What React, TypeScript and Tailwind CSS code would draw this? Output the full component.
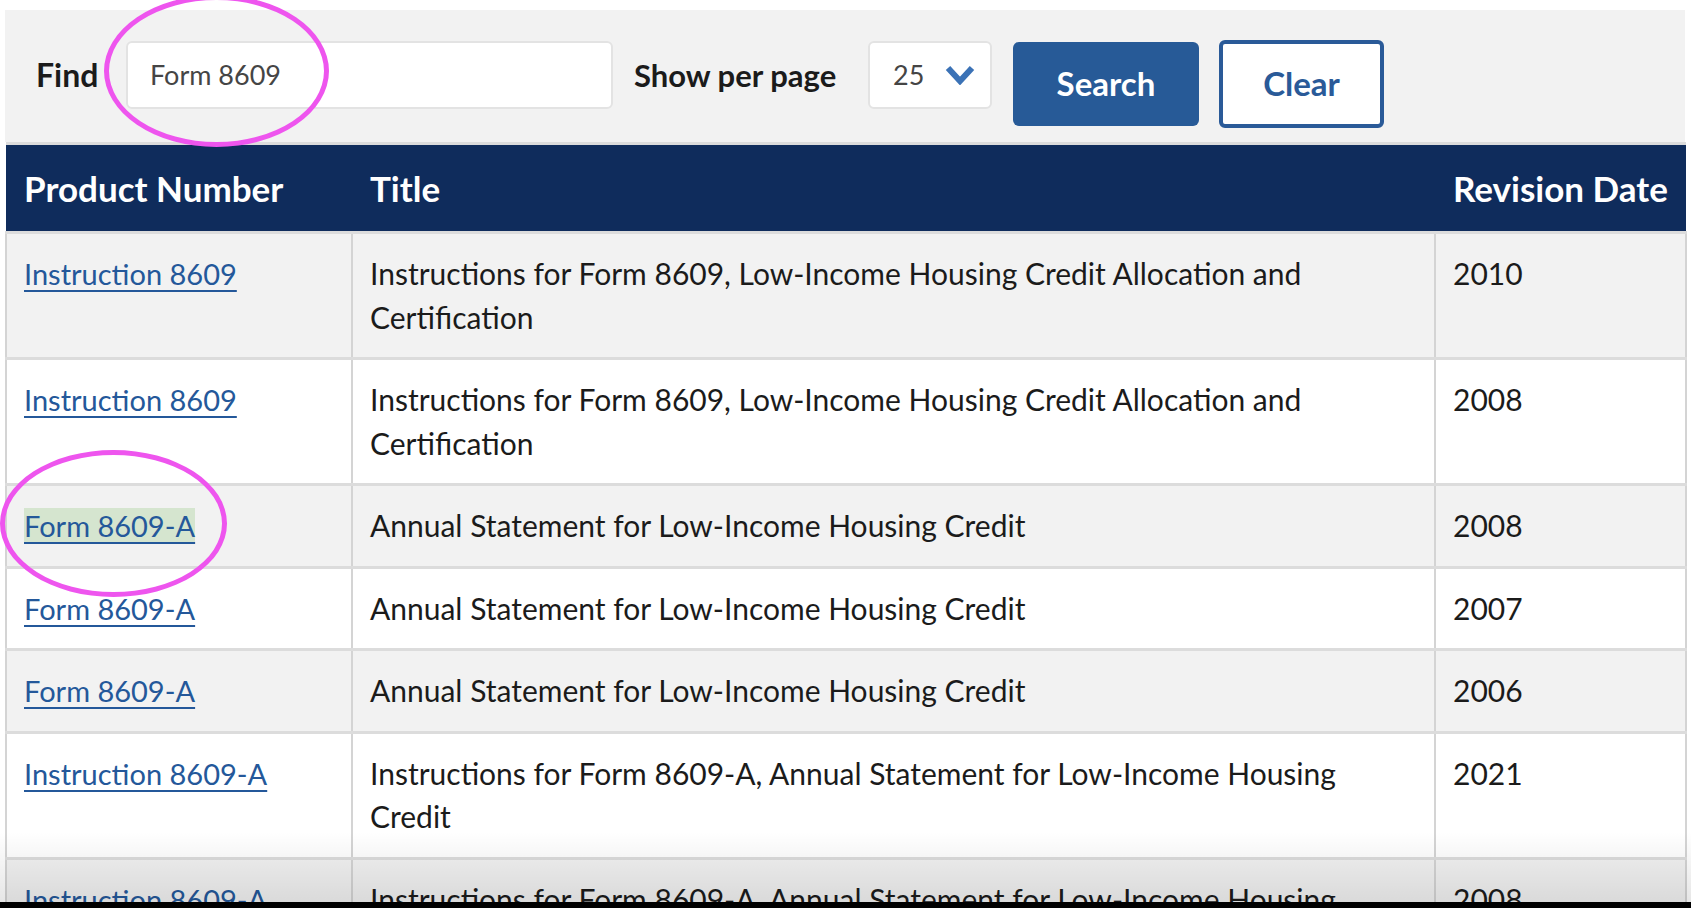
import React from 'react';

type Row = {
  product: string;
  title: string;
  date: string;
  highlight?: boolean;
};

const rows: Row[] = [
  {
    product: 'Instruction 8609',
    title: 'Instructions for Form 8609, Low-Income Housing Credit Allocation and Certification',
    date: '2010',
  },
  {
    product: 'Instruction 8609',
    title: 'Instructions for Form 8609, Low-Income Housing Credit Allocation and Certification',
    date: '2008',
  },
  {
    product: 'Form 8609-A',
    title: 'Annual Statement for Low-Income Housing Credit',
    date: '2008',
    highlight: true,
  },
  { product: 'Form 8609-A', title: 'Annual Statement for Low-Income Housing Credit', date: '2007' },
  { product: 'Form 8609-A', title: 'Annual Statement for Low-Income Housing Credit', date: '2006' },
  {
    product: 'Instruction 8609-A',
    title: 'Instructions for Form 8609-A, Annual Statement for Low-Income Housing Credit',
    date: '2021',
  },
  {
    product: 'Instruction 8609-A',
    title: 'Instructions for Form 8609-A, Annual Statement for Low-Income Housing Credit',
    date: '2008',
  },
];

function Chevron() {
  return (
    <svg width="30" height="20" viewBox="0 0 30 20" aria-hidden>
      <polyline
        points="3,3 15,16 27,3"
        fill="none"
        stroke="#3b72b6"
        strokeWidth="6"
        strokeLinejoin="miter"
      />
    </svg>
  );
}

function Toolbar() {
  return (
    <div className="flex h-[132px] items-start bg-[#f2f2f2] pl-[31px] pt-[31px]">
      <label className="flex h-[68px] w-[90px] items-center text-[32px] font-bold text-[#1b1b1b]">
        Find
      </label>
      <div className="flex h-[68px] w-[487px] items-center rounded-[6px] border-2 border-[#e3e3e3] bg-white pl-[22px] text-[27px] text-[#454545]">
        Form 8609
      </div>
      <label className="ml-[21px] flex h-[68px] w-[234px] items-center text-[31px] font-bold text-[#1b1b1b]">
        Show per page
      </label>
      <div className="flex h-[68px] w-[124px] items-center rounded-[6px] border-2 border-[#e3e3e3] bg-white pl-[23px] text-[27px] text-[#454545]">
        <span className="w-[52px]">25</span>
        <Chevron />
      </div>
      <button
        type="button"
        className="ml-[21px] mt-[1px] h-[84px] w-[186px] rounded-[6px] bg-[#275a97] text-[33px] font-bold text-white"
      >
        Search
      </button>
      <button
        type="button"
        className="ml-[20px] -mt-[1px] h-[88px] w-[165px] rounded-[6px] border-[4px] border-[#2a5a98] bg-white text-[33px] font-bold text-[#2a5a98]"
      >
        Clear
      </button>
    </div>
  );
}

function ResultsTable() {
  return (
    <table className="w-[1680px] table-fixed border-collapse">
      <colgroup>
        <col className="w-[346px]" />
        <col className="w-[1083px]" />
        <col className="w-[251px]" />
      </colgroup>
      <thead>
        <tr className="h-[89px] border-t-[3px] border-[#dcdcdc] bg-[#0f2c5c] text-left text-white">
          <th className="pl-[18px] text-[35px] font-bold">Product Number</th>
          <th className="pl-[18px] text-[35px] font-bold">Title</th>
          <th className="pl-[18px] text-[35px] font-bold">Revision Date</th>
        </tr>
      </thead>
      <tbody>
        {rows.map((row, i) => (
          <tr
            key={i}
            className={`border-y-[3px] border-[#dcdcdc] align-top text-[30px] leading-[43.5px] text-[#1b1b1b] ${
              i % 2 === 0 ? 'bg-[#f2f2f2]' : 'bg-white'
            }`}
          >
            <td className="border-l-2 border-[#d4d4d4] py-[18px] pl-[17px]">
              <a
                href="#"
                className={`text-[29px] text-[#24589a] underline decoration-2 underline-offset-[5px] ${
                  row.highlight ? 'bg-[#d5e5cf]' : ''
                }`}
              >
                {row.product}
              </a>
            </td>
            <td className="border-l-2 border-[#d4d4d4] py-[18px] pl-[17px] pr-[60px]">{row.title}</td>
            <td className="border-x-2 border-[#d4d4d4] py-[18px] pl-[17px]">{row.date}</td>
          </tr>
        ))}
      </tbody>
    </table>
  );
}

export default function App() {
  return (
    <div
      className="relative h-[908px] w-full overflow-hidden bg-white pt-[10px]"
      style={{ fontFamily: 'Lato, "Noto Sans", sans-serif' }}
    >
      <div className="ml-[5px] w-[1680px]">
        <Toolbar />
        <ResultsTable />
      </div>

      {/* scroll shadow at the bottom edge */}
      <div className="pointer-events-none absolute bottom-[6px] left-0 h-[70px] w-full bg-gradient-to-b from-transparent to-black/10" />
      <div className="absolute bottom-0 left-0 h-[6px] w-full bg-black" />

      {/* annotation circles */}
      <div className="pointer-events-none absolute left-[104px] top-[-5px] h-[152px] w-[225px] rounded-[50%] border-[5px] border-[#ee55ee]" />
      <div className="pointer-events-none absolute left-[0px] top-[450px] h-[147px] w-[227px] rounded-[50%] border-[5px] border-[#ee55ee]" />
    </div>
  );
}
